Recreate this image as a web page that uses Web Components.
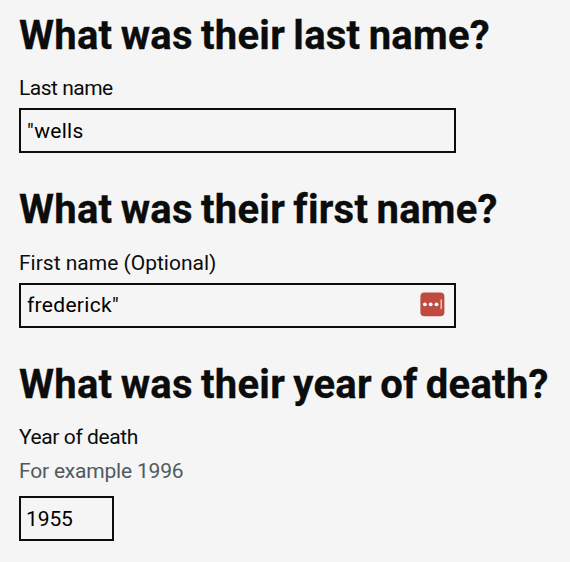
<!DOCTYPE html>
<html lang="en">
<head>
<meta charset="utf-8">
<title>Find a will</title>
<style>
  body {
    margin: 0;
    background: #f5f5f5;
    color: #0b0c0c;
    font-family: Roboto, "Noto Sans", sans-serif;
  }
  .last-name {
    --label-spacing: -0.5px;
    --value-spacing: 0.3px;
  }
  .first-name {
    --value-spacing: 0.3px;
  }
  .year {
    --label-spacing: -0.4px;
    --hint-spacing: -0.2px;
    --value-spacing: -0.1px;
  }
</style>
</head>
<body>

<search-form>
  <form-question>
    <span slot="heading">What was their last name?</span>
    <text-field class="last-name" label="Last name" value='"wells'></text-field>
  </form-question>
  <form-question>
    <span slot="heading">What was their first name?</span>
    <text-field class="first-name" label="First name (Optional)" value='frederick"'>
      <password-badge slot="badge"></password-badge>
    </text-field>
  </form-question>
  <form-question>
    <span slot="heading">What was their year of death?</span>
    <text-field class="year" label="Year of death" hint="For example 1996" value="1955" short></text-field>
  </form-question>
</search-form>

<script>
// Outer column that holds the questions
class SearchForm extends HTMLElement {
  constructor() {
    super();
    this.attachShadow({ mode: 'open' });
    this.shadowRoot.innerHTML = `
      <style>
        :host {
          display: flex;
          flex-direction: column;
          gap: 32px;
          box-sizing: border-box;
          height: 562px;
          padding: 10.5px 0 0 19px;
          overflow: hidden;
        }
      </style>
      <slot></slot>
    `;
  }
}
customElements.define('search-form', SearchForm);

// A big heading with its field below
class FormQuestion extends HTMLElement {
  constructor() {
    super();
    this.attachShadow({ mode: 'open' });
    this.shadowRoot.innerHTML = `
      <style>
        :host {
          display: block;
        }
        h2 {
          margin: 0 0 12.5px;
          font-size: 40px;
          font-weight: 700;
          line-height: 50px;
          letter-spacing: 0.25px;
          word-spacing: -1.9px;
          white-space: nowrap;
          -webkit-text-stroke: 0.3px;
        }
      </style>
      <h2><slot name="heading"></slot></h2>
      <slot></slot>
    `;
  }
}
customElements.define('form-question', FormQuestion);

// Label, optional hint and a text input
class TextField extends HTMLElement {
  constructor() {
    super();
    this.attachShadow({ mode: 'open' });
  }

  connectedCallback() {
    this.shadowRoot.innerHTML = `
      <style>
        :host {
          display: block;
          font-size: 21px;
        }
        label, .hint {
          display: block;
          line-height: 30px;
          white-space: nowrap;
        }
        label {
          letter-spacing: var(--label-spacing, 0);
        }
        .hint {
          margin: 4px 0 10px;
          color: #505a5f;
          letter-spacing: var(--hint-spacing, 0);
        }
        .box {
          display: flex;
          align-items: center;
          box-sizing: border-box;
          width: 437px;
          height: 45px;
          margin-top: 5px;
          padding: 0 10px 0 6px;
          border: 2px solid #0b0c0c;
        }
        :host([short]) .box {
          width: 95px;
          padding-left: 5px;
        }
        input {
          flex: 1;
          min-width: 0;
          padding: 0;
          border: 0;
          outline: 0;
          background: none;
          color: #000;
          font: inherit;
          letter-spacing: var(--value-spacing, 0);
        }
      </style>
      <label for="field"></label>
      <div class="box">
        <input id="field" type="text" autocomplete="off" spellcheck="false">
        <slot name="badge"></slot>
      </div>
    `;

    const label = this.shadowRoot.querySelector('label');
    label.textContent = this.getAttribute('label');

    if (this.hasAttribute('hint')) {
      const hint = document.createElement('div');
      hint.classList.add('hint');
      hint.textContent = this.getAttribute('hint');
      label.after(hint);
    }

    this.shadowRoot.querySelector('input').value = this.getAttribute('value');
  }
}
customElements.define('text-field', TextField);

// Red password manager button shown inside the input
class PasswordBadge extends HTMLElement {
  constructor() {
    super();
    this.attachShadow({ mode: 'open' });
    this.shadowRoot.innerHTML = `
      <style>
        :host {
          display: block;
          width: 24px;
          height: 24px;
        }
        svg {
          display: block;
          overflow: visible;
        }
      </style>
      <svg width="24" height="24" viewBox="0 0 24 24">
        <rect x="0.4" y="-0.5" width="24" height="23.7" rx="4" fill="#bf4a40"/>
        <g fill="#fff">
          <circle cx="4.9" cy="11.3" r="1.9"/>
          <circle cx="10.7" cy="11.3" r="1.9"/>
          <circle cx="16.5" cy="11.3" r="1.9"/>
          <rect x="20.6" y="6.5" width="1" height="9.6"/>
        </g>
      </svg>
    `;
  }
}
customElements.define('password-badge', PasswordBadge);
</script>
</body>
</html>
